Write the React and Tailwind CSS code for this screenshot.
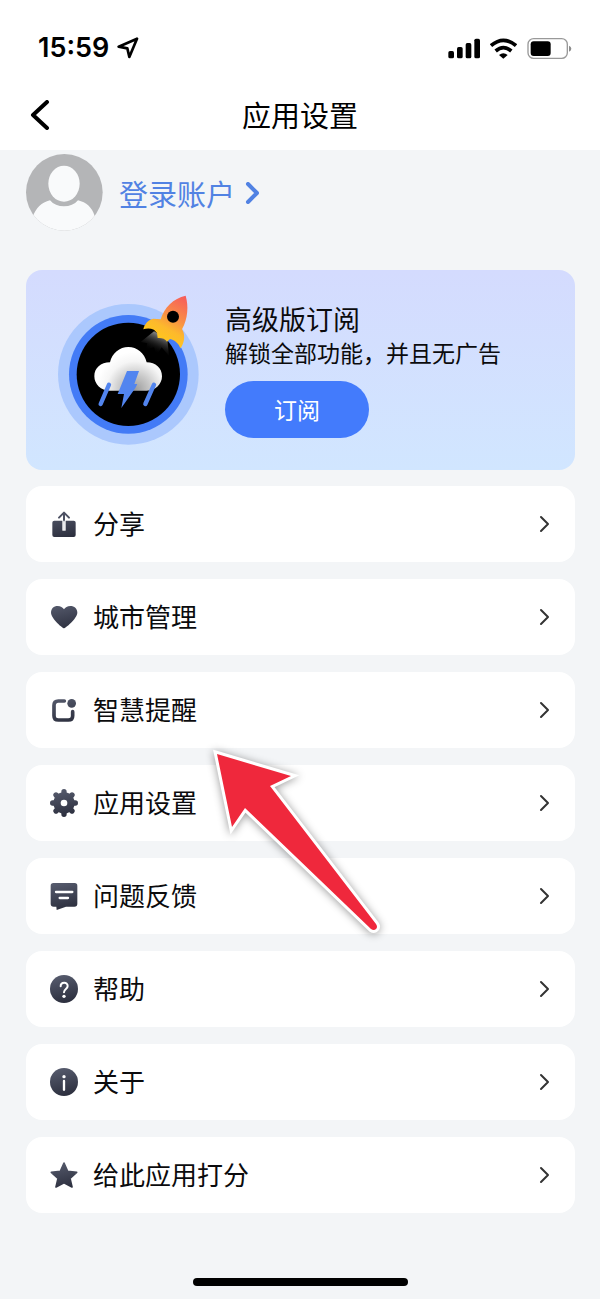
import React from "react";

function DarkFill({ id }) {
  return (
    <defs>
      <linearGradient id={id} gradientUnits="userSpaceOnUse" x1="30" y1="0" x2="50" y2="84">
        <stop offset="0" stopColor="#565b6d" />
        <stop offset="1" stopColor="#2b2e3d" />
      </linearGradient>
    </defs>
  );
}

function Icon({ name, children }) {
  return (
    <svg viewBox="0 0 84 84" className="size-7 shrink-0" fill={`url(#fill-${name})`} aria-hidden="true">
      <DarkFill id={`fill-${name}`} />
      {children}
    </svg>
  );
}

const STROKE = { fill: "none", strokeLinecap: "round", strokeLinejoin: "round" };

const icons = {
  share: (
    <Icon name="share">
      <rect x="7" y="32" width="70" height="49" rx="6" />
      <path d="M42 29V62" {...STROKE} stroke="#fff" strokeWidth="10" strokeLinecap="butt" />
      <path d="M27 23L42 8L57 23M42 10V34" {...STROKE} stroke="#4d5163" strokeWidth="6" />
      <path d="M42 34V58" {...STROKE} stroke="#e6e7ea" strokeWidth="5" />
    </Icon>
  ),
  heart: (
    <Icon name="heart">
      <path d="M42 76C39 76 4 48 3 29C3 17 11 9 23 9C32 9 38 13 42 19C46 13 52 9 61 9C73 9 82 17 82 29C81 48 45 76 42 76Z" />
    </Icon>
  ),
  remind: (
    <Icon name="remind">
      <path d="M43 15H25Q12 15 12 28V59Q12 72 25 72H55Q68 72 68 59V47" {...STROKE} stroke="url(#fill-remind)" strokeWidth="11" />
      <circle cx="65" cy="22" r="13" />
    </Icon>
  ),
  gear: (
    <Icon name="gear">
      <circle cx="42" cy="42" r="32" />
      <path
        d="M42 8V76M8 42H76M18 18L66 66M66 18L18 66"
        {...STROKE}
        stroke="url(#fill-gear)"
        strokeWidth="16"
      />
      <circle cx="42" cy="42" r="10" fill="#fff" />
    </Icon>
  ),
  feedback: (
    <Icon name="feedback">
      <path d="M10 3H74Q82 3 82 11V65Q82 74 73 74H48L20 84L19 74H11Q2 74 2 65V11Q2 3 10 3Z" />
      <path d="M18 30H67M29 48H54" {...STROKE} stroke="#fff" strokeWidth="7" />
    </Icon>
  ),
  help: (
    <Icon name="help">
      <circle cx="42" cy="42" r="42" />
      <path d="M32 34C32 20 53 20 53 33C53 42 42 42 42 52" {...STROKE} stroke="#fff" strokeWidth="6" />
      <circle cx="42" cy="64" r="5" fill="#fff" />
    </Icon>
  ),
  about: (
    <Icon name="about">
      <circle cx="42" cy="42" r="42" />
      <path d="M42 39V65" {...STROKE} stroke="#fff" strokeWidth="7" />
      <circle cx="42" cy="26" r="5" fill="#fff" />
    </Icon>
  ),
  star: (
    <Icon name="star">
      <path
        d="M42 6L53 31L80 34L60 52L66 78L42 65L18 78L24 52L4 34L31 31Z"
        stroke="url(#fill-star)"
        strokeWidth="5"
        strokeLinejoin="round"
      />
    </Icon>
  ),
};

const items = [
  ["share", "分享"],
  ["heart", "城市管理"],
  ["remind", "智慧提醒"],
  ["gear", "应用设置"],
  ["feedback", "问题反馈"],
  ["help", "帮助"],
  ["about", "关于"],
  ["star", "给此应用打分"],
];

function StatusBar() {
  return (
    <div className="flex h-20 items-center justify-between pt-4 pr-7 pl-[38px]">
      <div className="flex items-center gap-2">
        <span className="font-[Inter] text-[27px] leading-8 font-semibold">15:59</span>
        <svg viewBox="352 50 66 66" className="size-[22px]" aria-hidden="true">
          <path d="M412 55L357 79L383 84L389 110Z" fill="none" stroke="#000" strokeWidth="8" strokeLinejoin="round" />
        </svg>
      </div>
      <div className="flex items-center gap-[10px]">
        <svg viewBox="444 50 96 63" className="h-[21px] w-8" aria-hidden="true">
          <rect x="445" y="89" width="17" height="22" rx="5" />
          <rect x="471" y="77" width="17" height="34" rx="5" />
          <rect x="497" y="65" width="17" height="46" rx="5" />
          <rect x="523" y="52" width="17" height="59" rx="5" />
        </svg>
        <svg viewBox="570 50 81 63" className="h-[21px] w-[27px]" fill="none" stroke="#000" strokeWidth="11" aria-hidden="true">
          <path d="M573 73Q610 41 648 73" />
          <path d="M587 89Q610 69 634 89" />
          <path d="M597 101Q610 90 623 101L610 112Z" fill="#000" stroke="none" />
        </svg>
        <svg viewBox="680 50 135 63" className="h-[21px] w-[45px]" aria-hidden="true">
          <rect x="683" y="52" width="118" height="59" rx="17" fill="none" stroke="#999" strokeWidth="4" />
          <rect x="691" y="60" width="60" height="44" rx="9" />
          <path d="M806 73Q813 76 813 82Q813 88 806 91Z" fill="#8c8c8c" />
        </svg>
      </div>
    </div>
  );
}

function PremiumBadge() {
  return (
    <svg viewBox="114 105 423 450" className="h-[150px] w-[141px] shrink-0" aria-hidden="true">
      <defs>
        <linearGradient id="rocket" gradientUnits="userSpaceOnUse" x1="498" y1="108" x2="425" y2="240">
          <stop offset="0" stopColor="#f65a5c" />
          <stop offset="0.5" stopColor="#f99045" />
          <stop offset="0.75" stopColor="#fdb92c" />
          <stop offset="1" stopColor="#ffc61d" />
        </linearGradient>
        <radialGradient id="cloud" gradientUnits="userSpaceOnUse" cx="345" cy="390" r="115">
          <stop offset="0" stopColor="#9b9b9b" />
          <stop offset="0.4" stopColor="#c9c9c9" />
          <stop offset="0.75" stopColor="#f5f5f5" />
          <stop offset="1" stopColor="#fff" />
        </radialGradient>
        <linearGradient id="flame" gradientUnits="userSpaceOnUse" x1="430" y1="222" x2="405" y2="280">
          <stop offset="0" stopColor="#999" />
          <stop offset="1" stopColor="#000" stopOpacity="0" />
        </linearGradient>
        <clipPath id="disc">
          <circle cx="325" cy="343" r="155" />
        </clipPath>
      </defs>
      <circle cx="325" cy="343" r="211" fill="#abc8fd" />
      <circle cx="325" cy="343" r="178" fill="#437bf6" />
      <circle cx="325" cy="343" r="155" />
      <path
        d="M402 214L362 246L382 250L378 268L402 262L410 284L425 262L447 288L442 238Z"
        fill="url(#flame)"
        clipPath="url(#disc)"
      />
      <path
        d="M269 392C243 392 223 373 223 349C223 324 242 307 270 307C276 279 299 261 325 261C351 261 374 279 380 307C407 307 426 324 426 349C426 373 406 392 380 392Z"
        fill="url(#cloud)"
      />
      <g fill="#5285ef">
        <path d="M321 333H357L343 372H352L346 384L304 444L312 402H293Z" />
        <path d="M267 374L242 432M402 374L376 432" stroke="#5285ef" strokeWidth="13" strokeLinecap="round" />
      </g>
      <path
        d="M497 107C506 137 504 176 486 208C495 220 496 247 481 265C477 251 465 241 450 237L441 245C435 236 425 233 413 234L411 219L402 209C391 205 380 205 370 208C373 192 386 178 400 176L422 178C432 143 460 115 497 107Z"
        fill="url(#rocket)"
      />
      <circle cx="459" cy="170" r="18" />
    </svg>
  );
}

function PointerArrow() {
  const shape = "M11 14L85 36L64 46L170 184Q172 187 170 189Q168 191 165 189L39 68L26 87Z";
  return (
    <svg
      viewBox="0 0 184 204"
      className="pointer-events-none absolute top-[254px] left-[180px] h-[204px] w-[184px] drop-shadow-[0_1px_4px_rgba(0,0,0,0.4)]"
      aria-hidden="true"
    >
      <path d={shape} fill="#fff" stroke="#fff" strokeWidth="6" strokeLinejoin="miter" strokeMiterlimit="3" />
      <path d={shape} fill="#ef283c" />
    </svg>
  );
}

export default function App() {
  return (
    <div className="flex min-h-screen flex-col bg-[#f3f5f7] font-['Noto_Sans_CJK_SC',sans-serif] text-[#0b0b0d]">
      <header className="bg-white text-black">
        <StatusBar />
        <div className="grid h-[70px] grid-cols-[1fr_auto_1fr] items-center px-[30px]">
          <button type="button" aria-label="返回" className="w-5">
            <svg viewBox="0 0 20 30" className="h-[30px] w-5" {...STROKE} stroke="#000" strokeWidth="4" aria-hidden="true">
              <path d="M17 2L3 15L17 28" />
            </svg>
          </button>
          <h1 className="pb-0.5 text-[29px] leading-10">应用设置</h1>
        </div>
      </header>

      <main className="flex flex-col pt-1 pr-[25px] pl-[26px]">
        <a href="#login" className="flex items-center gap-4 self-start text-[#5182e3]">
          <svg viewBox="78 403 231 231" className="size-[77px]" aria-hidden="true">
            <clipPath id="avatar">
              <circle cx="193" cy="518" r="115" />
            </clipPath>
            <g clipPath="url(#avatar)">
              <path d="M78 403H309V634H78Z" fill="#b4b5b7" />
              <path d="M98 592C107 566 125 548 150 542C160 554 175 560 192 560C209 560 224 554 234 542C259 548 276 563 284 589L310 589V640H78Z" fill="#f9fafb" />
              <path d="M78 560L98 592V640H78ZM310 560L284 589V640H310Z" fill="#f9fafb" />
              <ellipse cx="192" cy="492" rx="47" ry="54" fill="#f9fafb" />
            </g>
          </svg>
          <span className="flex items-center gap-[10px]">
            <span className="text-[29px] leading-10">登录账户</span>
            <svg viewBox="0 0 14 22" className="h-[22px] w-[14px]" {...STROKE} stroke="currentColor" strokeWidth="4" aria-hidden="true">
              <path d="M3 2L12 11L3 20" />
            </svg>
          </span>
        </a>

        <section className="mt-[39px] flex h-[200px] items-center gap-[26px] rounded-2xl bg-linear-to-b from-[#d4dbfe] to-[#d1e6ff] pl-8">
          <PremiumBadge />
          <div>
            <h2 className="text-[27px] leading-[34px]">高级版订阅</h2>
            <p className="text-[23px] leading-8">解锁全部功能，并且无广告</p>
            <button type="button" className="mt-[13px] h-[57px] w-36 rounded-full bg-[#437bfc] pb-0.5 text-[23px] leading-8 text-white">
              订阅
            </button>
          </div>
        </section>

        <nav className="relative mt-4">
          <ul className="flex flex-col gap-[17px]">
            {items.map(([key, label]) => (
              <li key={key}>
                <a href={`#${key}`} className="flex h-[76px] items-center gap-[15px] rounded-2xl bg-white px-6">
                  {icons[key]}
                  <span className="flex-1 pb-0.5 text-[26px] leading-9">{label}</span>
                  <svg viewBox="0 0 12 18" className="h-[18px] w-3" {...STROKE} stroke="#333" strokeWidth="2" aria-hidden="true">
                    <path d="M2 2L9 9L2 16" />
                  </svg>
                </a>
              </li>
            ))}
          </ul>
          <PointerArrow />
        </nav>
      </main>

      <div className="mx-auto mt-auto pt-10 pb-[13px]">
        <div className="h-2 w-[215px] rounded-full bg-black" />
      </div>
    </div>
  );
}
